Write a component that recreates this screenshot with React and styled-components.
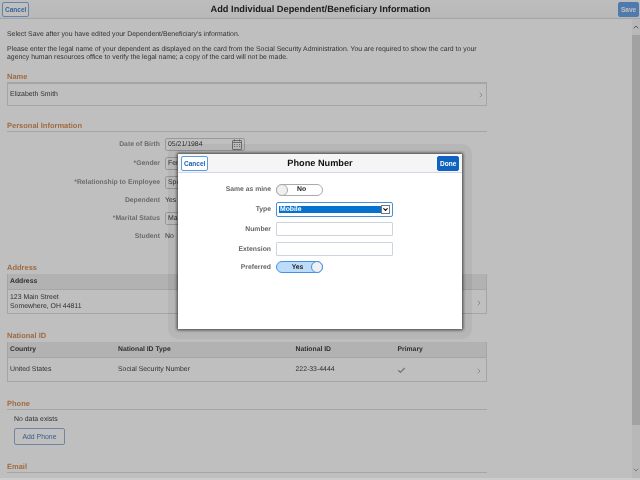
import React from 'react'
import styled, { createGlobalStyle } from 'styled-components'
import { ChevronRight, ChevronUp, ChevronDown, Check } from 'lucide-react'

const GlobalStyle = createGlobalStyle`
  html, body {
    margin: 0;
    height: 100%;
    overflow: hidden;
    background: #fff;
  }
  body {
    font-family: "Liberation Sans", Arial, sans-serif;
    color: #3f3f3f;
    text-rendering: geometricPrecision;
  }
`

const Screen = styled.div`
  width: 640px;
  height: 480px;
  position: relative;
  overflow: hidden;
  display: flex;
  flex-direction: column;
  will-change: transform;
`

const Header = styled.header`
  height: 18px;
  flex: none;
  display: grid;
  grid-template-columns: 60px 1fr 60px;
  align-items: center;
  padding: 0 1px 0 2px;
  background: linear-gradient(#fcfcfc, #f6f6f6);
  border-bottom: 1px solid #d8dce8;
`

const Title = styled.h1`
  margin: 0;
  text-align: center;
  font-size: 9.25px;
  font-weight: bold;
  color: #2a2a2a;
`

const Button = styled.button`
  height: 15px;
  padding: 0 2px;
  width: ${props => props.$width}px;
  font: bold 6.5px "Liberation Sans", Arial, sans-serif;
  border-radius: 2px;
  border: 1px solid ${props => props.$primary ? props.$fill : props.$soft ? '#86b0e2' : '#5b9be0'};
  background: ${props => (props.$primary ? props.$fill : '#fff')};
  color: ${props => props.$primary ? '#fff' : props.$soft ? '#4f86c8' : '#1a5fb0'};
  justify-self: ${props => props.$end ? 'end' : 'start'};
`

const Body = styled.div`
  flex: 1;
  display: flex;
  min-height: 0;
`

const Content = styled.main`
  width: 480px;
  margin-left: 7px;
  font-size: 6.9px;
`

const Intro = styled.p`
  margin: ${props => props.$top}px 0 0;
  line-height: 8.7px;
  width: 472px;
`

const Section = styled.section`
  margin-top: ${props => props.$top}px;
`

const SectionTitle = styled.h2`
  margin: 0;
  height: ${props => (props.$plain ? 11 : 10)}px;
  line-height: 9px;
  font-size: 7.5px;
  font-weight: bold;
  color: #d68f58;
  border-bottom: ${props => (props.$plain ? 'none' : '1px solid #dcdcdc')};
`

const NameCard = styled.div`
  display: flex;
  align-items: center;
  justify-content: space-between;
  height: 20px;
  padding: 1px 1px 0 2px;
  border: 1px solid #dcdcdc;
`

const Arrow = styled(ChevronRight)`
  width: 8px;
  height: 8px;
  color: #999;
  flex: none;
`

const Form = styled.div`
  display: flex;
  flex-direction: column;
  margin-top: 3px;
`

const Row = styled.div`
  display: grid;
  grid-template-columns: 153px 1fr;
  column-gap: 5px;
  align-items: center;
  height: ${props => props.$height}px;
`

const Label = styled.label`
  text-align: right;
  font-size: 6.8px;
  font-weight: bold;
  color: #909090;
`

const FieldBox = styled.div`
  width: 80px;
  height: 13px;
  box-sizing: border-box;
  border: 1px solid #ccc;
  border-radius: 2px;
  padding: 0 2px;
  display: flex;
  align-items: center;
  justify-content: space-between;
`

const CalendarIcon = styled.svg`
  width: 10px;
  height: 11px;
  color: #777;
  flex: none;
`

const Table = styled.div`
  border: 1px solid #dcdcdc;
  border-top: none;
`

const TableHead = styled.div`
  display: grid;
  grid-template-columns: ${props => props.$columns};
  align-items: center;
  height: 15px;
  padding-left: 2px;
  background: #eeeeee;
  border-bottom: 1px solid #dcdcdc;
  font-weight: bold;
  font-size: 6.8px;
`

const TableRow = styled.div`
  display: grid;
  grid-template-columns: ${props => props.$columns};
  align-items: center;
  box-sizing: border-box;
  height: 23px;
  padding: 3px 0 0 2px;
  line-height: 8.3px;
`

const RowEnd = styled.div`
  display: flex;
  justify-content: space-between;
  align-items: center;
  padding-right: 3px;
`

const Tick = styled(Check)`
  width: 9px;
  height: 9px;
  margin-left: -1px;
  color: #999;
  stroke-width: 3;
`

const Note = styled.div`
  margin: 6px 0 0 7px;
`

const AddButton = styled.button`
  display: block;
  margin: 5px 0 0 7px;
  width: 51px;
  height: 17px;
  font: 6.9px "Liberation Sans", Arial, sans-serif;
  color: #4a7fc0;
  background: #fff;
  border: 1px solid #8fb4dc;
  border-radius: 2px;
`

const Scrollbar = styled.div`
  width: 8px;
  margin-left: auto;
  margin-bottom: 2px;
  display: flex;
  flex-direction: column;
  align-items: center;
  background: #f6f6f6;
`

const ScrollEnd = styled.div`
  height: 16px;
  flex: none;
  display: flex;
  align-items: center;
  justify-content: center;
  color: #777;
`

const ScrollThumb = styled.div`
  flex: 1;
  width: 100%;
  background: #d8d8d8;
`

const Track = styled.div`
  height: ${props => props.$height}px;
  flex: none;
`

const Overlay = styled.div`
  position: absolute;
  inset: 0;
  background: rgba(0, 0, 0, 0.25);
  background-clip: padding-box;
  border-bottom: 2px solid rgba(0, 0, 0, 0.2);
`

const Halo = styled.div`
  position: absolute;
  left: 168px;
  top: 144px;
  width: 304px;
  height: 195px;
  border-radius: 10px;
  background: rgba(0, 0, 0, 0.05);
`

const Modal = styled.div`
  position: absolute;
  left: 178px;
  top: 154px;
  width: 284px;
  height: 175px;
  background: #fff;
  box-shadow: 0 0 3px 1px rgba(0, 0, 0, 0.65);
  display: flex;
  flex-direction: column;
`

const ModalHeader = styled.div`
  height: 18px;
  flex: none;
  display: grid;
  grid-template-columns: 50px 1fr 50px;
  align-items: center;
  padding: 0 3px;
  background: #f5f5f5;
  border-bottom: 1px solid #d4d8e4;
`

const ModalTitle = styled.div`
  text-align: center;
  font-size: 9.2px;
  font-weight: bold;
  color: #111;
`

const ModalForm = styled.div`
  display: flex;
  flex-direction: column;
  padding-top: 7px;
`

const ModalRow = styled.div`
  display: grid;
  grid-template-columns: 93px 117px;
  column-gap: 5px;
  align-items: center;
  height: ${props => props.$height}px;
`

const ModalLabel = styled.label`
  text-align: right;
  font-size: 6.8px;
  font-weight: bold;
  color: #666;
`

const Toggle = styled.div`
  width: 47px;
  height: 12px;
  box-sizing: border-box;
  border-radius: 6px;
  border: 1px solid ${props => (props.$on ? '#4a90e2' : '#aaa')};
  background: ${props => (props.$on ? '#bcdcfa' : '#fff')};
  position: relative;
  font-size: 6.8px;
  font-weight: bold;
  color: #222;
  display: flex;
  align-items: center;
  justify-content: center;
  padding: ${props => (props.$on ? '0 4px 0 0' : '0 0 0 4px')};
`

const Knob = styled.span`
  position: absolute;
  top: -1px;
  ${props => (props.$on ? 'right: -1px;' : 'left: -1px;')}
  width: 12px;
  height: 12px;
  box-sizing: border-box;
  border-radius: 50%;
  background: #f0f0f0;
  border: 1px solid ${props => (props.$on ? '#4a90e2' : '#aaa')};
`

const SelectBox = styled.div`
  width: 117px;
  height: 15px;
  box-sizing: border-box;
  border: 1px solid #4a90d9;
  border-radius: 2px;
  padding: 3px 2px;
  display: flex;
`

const SelectValue = styled.div`
  flex: 1;
  background: #0572ce;
  color: #fff;
  font-size: 6.8px;
  font-weight: bold;
  line-height: 7px;
  padding-left: 1px;
`

const SelectArrow = styled.div`
  width: 9px;
  margin: -1px 0;
  box-sizing: border-box;
  border: 1px solid #777;
  display: flex;
  align-items: center;
  justify-content: center;
  color: #111;
`

const TextInput = styled.input`
  width: 117px;
  height: 14px;
  box-sizing: border-box;
  border: 1px solid #cfd4dc;
  border-radius: 1px;
  padding: 0 2px;
  background: #fff;
`

const addressColumns = '1fr'
const idColumns = '108px 177.5px 102px 1fr'

export default function App () {
  return (
    <Screen>
      <GlobalStyle />
      <Header>
        <Button $width={27} $soft>Cancel</Button>
        <Title>Add Individual Dependent/Beneficiary Information</Title>
        <Button $width={21} $primary $fill='#6ba3e8' $end>Save</Button>
      </Header>
      <Body>
        <Content>
          <Intro $top={12}>Select Save after you have edited your Dependent/Beneficiary's information.</Intro>
          <Intro $top={6}>
            Please enter the legal name of your dependent as displayed on the card from the Social Security Administration. You are required to show the card to your agency human resources office to verify the legal name; a copy of the card will not be made.
          </Intro>

          <Section $top={8.4}>
            <SectionTitle>Name</SectionTitle>
            <NameCard>Elizabeth Smith<Arrow /></NameCard>
          </Section>

          <Section $top={15}>
            <SectionTitle>Personal Information</SectionTitle>
            <Form>
              <Row $height={19}>
                <Label>Date of Birth</Label>
                <FieldBox>
                  05/21/1984
                  <CalendarIcon viewBox='0 0 10 11' fill='none' stroke='currentColor' strokeWidth='0.8'>
                    <rect x='0.5' y='1.5' width='9' height='9' rx='0.5' />
                    <path d='M0.5 3.5h9M2.5 0.5v2M7.5 0.5v2' />
                    <path d='M2 5.5h1M4.5 5.5h1M7 5.5h1M2 7.5h1M4.5 7.5h1M7 7.5h1' />
                  </CalendarIcon>
                </FieldBox>
              </Row>
              <Row $height={20}><Label>*Gender</Label><FieldBox>Female</FieldBox></Row>
              <Row $height={18}><Label>*Relationship to Employee</Label><FieldBox>Spouse</FieldBox></Row>
              <Row $height={18}><Label>Dependent</Label><span>Yes</span></Row>
              <Row $height={18}><Label>*Marital Status</Label><FieldBox>Married</FieldBox></Row>
              <Row $height={17}><Label>Student</Label><span>No</span></Row>
            </Form>
          </Section>

          <Section $top={18}>
            <SectionTitle $plain>Address</SectionTitle>
            <Table>
              <TableHead $columns={addressColumns}>Address</TableHead>
              <TableRow $columns={addressColumns}>
                <RowEnd>
                  <span>123 Main Street<br />Somewhere, OH 44811</span>
                  <Arrow />
                </RowEnd>
              </TableRow>
            </Table>
          </Section>

          <Section $top={17}>
            <SectionTitle $plain>National ID</SectionTitle>
            <Table>
              <TableHead $columns={idColumns}>
                <span>Country</span>
                <span>National ID Type</span>
                <span>National ID</span>
                <span>Primary</span>
              </TableHead>
              <TableRow $columns={idColumns}>
                <span>United States</span>
                <span>Social Security Number</span>
                <span>222-33-4444</span>
                <RowEnd><Tick /><Arrow /></RowEnd>
              </TableRow>
            </Table>
          </Section>

          <Section $top={17}>
            <SectionTitle>Phone</SectionTitle>
            <Note>No data exists</Note>
            <AddButton>Add Phone</AddButton>
          </Section>

          <Section $top={17}>
            <SectionTitle>Email</SectionTitle>
          </Section>
        </Content>
        <Scrollbar>
          <ScrollEnd><ChevronUp size={8} strokeWidth={3} /></ScrollEnd>
          <ScrollThumb />
          <Track $height={37} />
          <ScrollEnd><ChevronDown size={8} strokeWidth={2} /></ScrollEnd>
        </Scrollbar>
      </Body>

      <Overlay />
      <Halo />
      <Modal>
        <ModalHeader>
          <Button $width={27}>Cancel</Button>
          <ModalTitle>Phone Number</ModalTitle>
          <Button $width={22} $primary $fill='#0e62c0' $end>Done</Button>
        </ModalHeader>
        <ModalForm>
          <ModalRow $height={19}>
            <ModalLabel>Same as mine</ModalLabel>
            <Toggle>No<Knob /></Toggle>
          </ModalRow>
          <ModalRow $height={20}>
            <ModalLabel>Type</ModalLabel>
            <SelectBox>
              <SelectValue>Mobile</SelectValue>
              <SelectArrow><ChevronDown size={7} strokeWidth={4} /></SelectArrow>
            </SelectBox>
          </ModalRow>
          <ModalRow $height={20}>
            <ModalLabel>Number</ModalLabel>
            <TextInput />
          </ModalRow>
          <ModalRow $height={20}>
            <ModalLabel>Extension</ModalLabel>
            <TextInput />
          </ModalRow>
          <ModalRow $height={16}>
            <ModalLabel>Preferred</ModalLabel>
            <Toggle $on>Yes<Knob $on /></Toggle>
          </ModalRow>
        </ModalForm>
      </Modal>
    </Screen>
  )
}
